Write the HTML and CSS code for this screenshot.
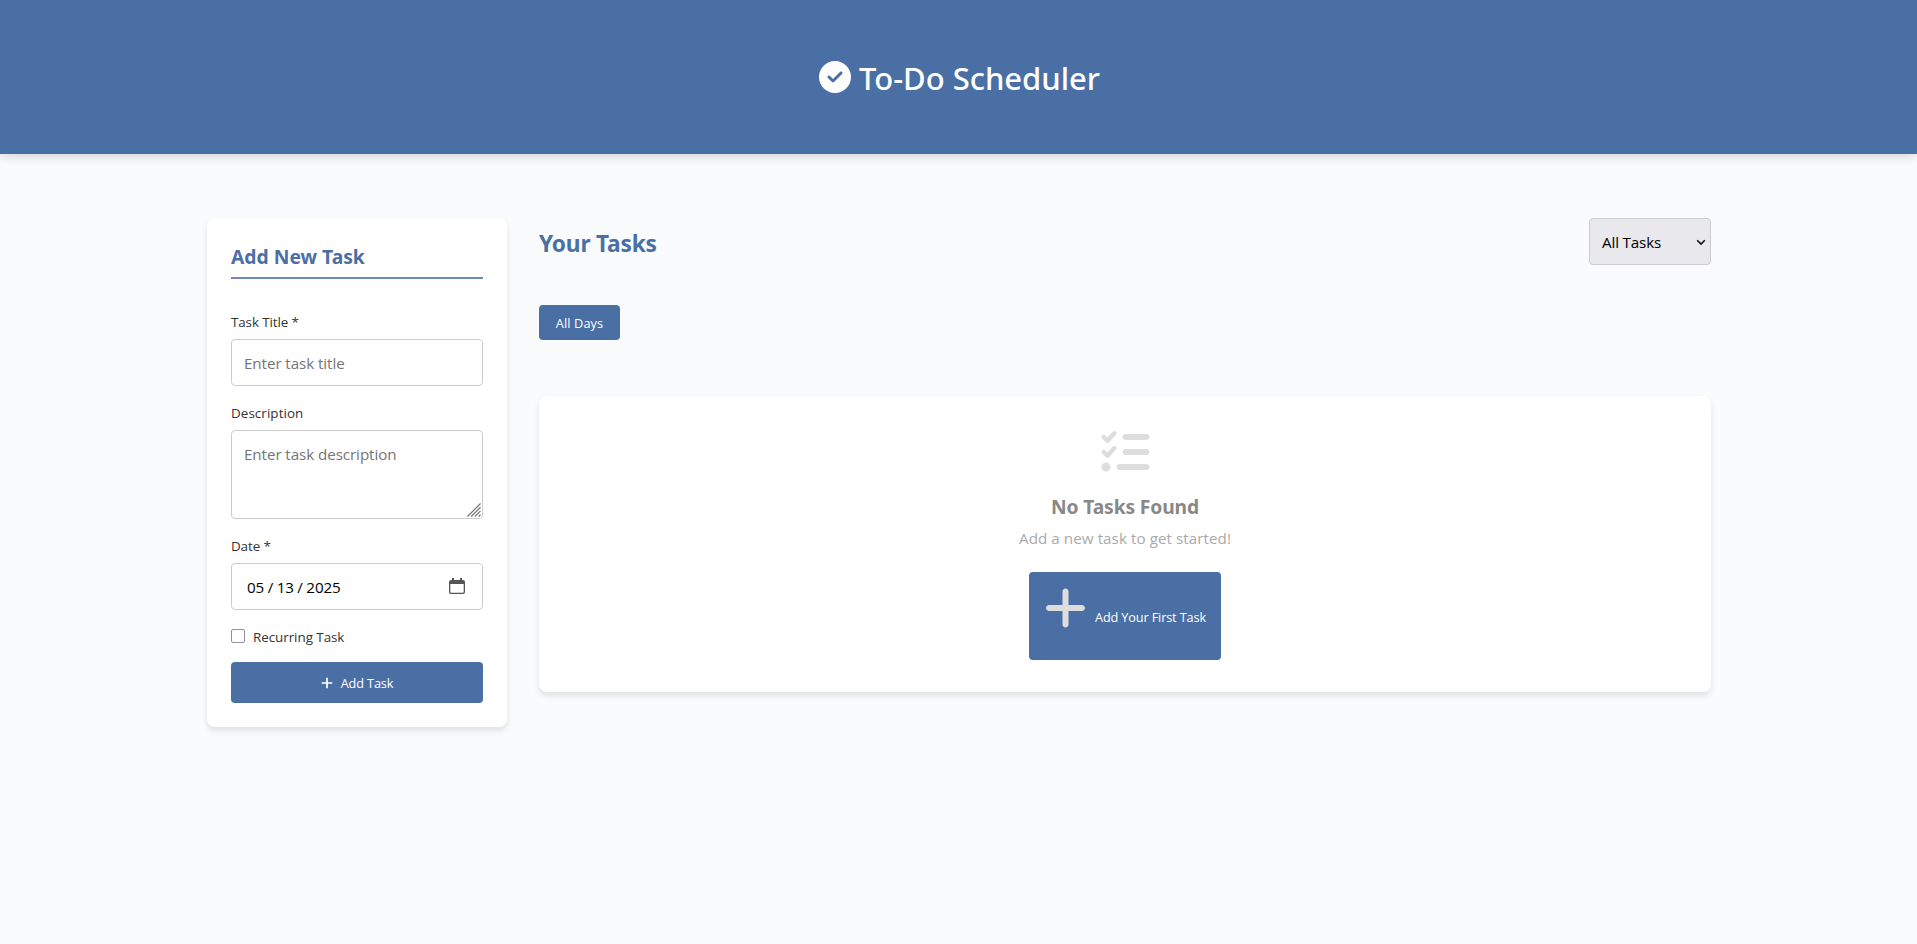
FILE: index.html
```html
<!DOCTYPE html>
<html lang="en">
<head>
<meta charset="utf-8">
<title>To-Do Scheduler</title>
<link rel="stylesheet" href="styles.css">
</head>
<body>
<header class="site-header">
  <h1 class="site-title">
    <svg class="title-icon" viewBox="0 0 512 512"><path fill="currentColor" d="M256 512A256 256 0 1 0 256 0a256 256 0 1 0 0 512zM369 209L241 337c-9.400 9.400-24.600 9.400-33.900 0l-64-64c-9.400-9.400-9.400-24.600 0-33.900s24.600-9.400 33.900 0l47 47L335 175c9.400-9.400 24.600-9.400 33.900 0s9.400 24.600 0 33.900z"/></svg>
    <span class="title-text">To-Do Scheduler</span>
  </h1>
</header>
<main class="layout">
  <form class="card task-form">
    <h2 class="form-title">Add New Task</h2>
    <label class="field-label" for="title">Task Title *</label>
    <input class="control" id="title" type="text" placeholder="Enter task title">
    <label class="field-label field-label-wide" for="desc">Description</label>
    <div class="area-wrap">
      <textarea class="control area" id="desc" placeholder="Enter task description"></textarea>
      <svg class="grip" viewBox="0 0 15 15"><path d="M.5 14.500l14-14M4.500 14.500l10-10M8.500 14.500l6-6M12.500 14.500l2-2" stroke="#777" stroke-width="1.300"/></svg>
    </div>
    <label class="field-label" for="date">Date *</label>
    <div class="date-wrap">
      <input class="control date" id="date" type="date" value="2025-05-13">
      <svg class="calendar" viewBox="0 0 16 16"><path fill="#555" fill-rule="evenodd" d="M3 0h2v2h6V0h2v2h1a2 2 0 0 1 2 2v10a2 2 0 0 1-2 2H2a2 2 0 0 1-2-2V4a2 2 0 0 1 2-2h1zM1.300 6v7.700a1 1 0 0 0 1 1h11.400a1 1 0 0 0 1-1V6z"/></svg>
    </div>
    <label class="check-row"><input class="check" type="checkbox"><span class="check-text">Recurring Task</span></label>
    <button class="btn submit" type="button">
      <svg class="plus" viewBox="0 0 448 512"><path fill="currentColor" d="M256 80c0-17.700-14.300-32-32-32s-32 14.300-32 32v144H48c-17.700 0-32 14.300-32 32s14.300 32 32 32h144v144c0 17.700 14.300 32 32 32s32-14.300 32-32V288h144c17.700 0 32-14.300 32-32s-14.300-32-32-32H256V80z"/></svg>
      <span>Add Task</span>
    </button>
  </form>
  <section class="tasks">
    <div class="tasks-head">
      <h2 class="tasks-title">Your Tasks</h2>
      <div class="select-wrap">
        <select class="control filter"><option>All Tasks</option></select>
        <svg class="chevron" viewBox="0 0 10 7"><path d="M1.200 1.200L5 5l3.800-3.800" fill="none" stroke="#111" stroke-width="1.600"/></svg>
      </div>
    </div>
    <div class="days"><button class="btn day" type="button">All Days</button></div>
    <div class="card empty">
      <svg class="list-icon" viewBox="0 0 512 512"><path fill="currentColor" d="M152.100 38.200c9.900 8.900 10.700 24 1.800 33.900l-72 80c-4.400 4.900-10.600 7.800-17.200 7.900s-12.900-2.400-17.600-7L7 113C-2.300 103.600-2.300 88.400 7 79s24.600-9.400 33.900 0l22.100 22.100 55.100-61.200c8.900-9.900 24-10.700 33.900-1.800zm0 160c9.900 8.900 10.700 24 1.800 33.900l-72 80c-4.400 4.900-10.600 7.800-17.200 7.900s-12.900-2.400-17.600-7L7 273c-9.400-9.400-9.400-24.600 0-33.900s24.600-9.400 33.900 0l22.100 22.100 55.100-61.200c8.900-9.900 24-10.700 33.900-1.800zM224 96c0-17.700 14.300-32 32-32H480c17.700 0 32 14.300 32 32s-14.300 32-32 32H256c-17.700 0-32-14.300-32-32zm0 160c0-17.700 14.300-32 32-32H480c17.700 0 32 14.300 32 32s-14.300 32-32 32H256c-17.700 0-32-14.300-32-32zM160 416c0-17.700 14.300-32 32-32H480c17.700 0 32 14.300 32 32s-14.300 32-32 32H192c-17.700 0-32-14.300-32-32zM48 368a48 48 0 1 1 0 96 48 48 0 1 1 0-96z"/></svg>
      <h3 class="empty-title">No Tasks Found</h3>
      <p class="empty-text">Add a new task to get started!</p>
      <button class="btn first" type="button">
        <svg class="plus-big" viewBox="0 0 448 512"><path fill="currentColor" d="M256 80c0-17.700-14.300-32-32-32s-32 14.300-32 32v144H48c-17.700 0-32 14.300-32 32s14.300 32 32 32h144v144c0 17.700 14.300 32 32 32s32-14.300 32-32V288h144c17.700 0 32-14.300 32-32s-14.300-32-32-32H256V80z"/></svg>
        <span class="first-text">Add Your First Task</span>
      </button>
    </div>
  </section>
</main>
</body>
</html>
```
FILE: styles.css
```css
* { box-sizing: border-box; margin: 0; }
body { min-height: 944px; background: #fafbfd; color: #333; font: 15.2px/24px "Open Sans", "Noto Sans", sans-serif; }
h1, h2, h3 { font-family: "Noto Sans", "Open Sans", sans-serif; }
.site-header { height: 154px; display: flex; justify-content: center; align-items: center; background: #4a6fa5; color: #fff; box-shadow: 0 2px 10px rgba(0,0,0,.16); }
.site-title { display: flex; gap: 8px; align-items: center; padding: 2px 0 0 2px; font-size: 31px; font-weight: 500; line-height: 48px; letter-spacing: -.02px; }
.title-icon { width: 32px; height: 32px; margin-bottom: 3px; }
.layout { display: flex; align-items: flex-start; gap: 32px; width: 1504px; margin: 64px 0 0 207px; }
.card { background: #fff; border-radius: 8px; box-shadow: 0 4px 6px rgba(0,0,0,.1); }
.task-form { width: 300px; height: 509px; padding: 24px; flex: none; }
.form-title { height: 37px; margin-bottom: 32px; border-bottom: 2px solid #6b8cbb; color: #4a6fa5; font-size: 19.3px; line-height: 30px; }
.field-label { display: block; margin-bottom: 6px; font-size: 13.4px; line-height: 22px; letter-spacing: -.1px; }
.field-label-wide { letter-spacing: .08px; }
.control { display: block; width: 100%; height: 47px; margin-bottom: 16px; padding: 12px; border: 1px solid #ccc; border-radius: 4px; background: #fff; font: inherit; line-height: 21px; letter-spacing: -.08px; }
.area-wrap, .date-wrap { position: relative; }
.area { height: 89px; padding-top: 13px; resize: none; }
.grip { position: absolute; right: 2px; bottom: 2px; width: 14px; height: 14px; }
.date { padding: 13px 12px 11px 14px; color: #000; letter-spacing: -.1px; }
.date::-webkit-datetime-edit-text { padding: 0 2.5px; }
.date::-webkit-calendar-picker-indicator { opacity: 0; }
.calendar { position: absolute; right: 18px; top: 15px; width: 16px; height: 16px; }
.check-row { display: flex; align-items: center; gap: 8px; height: 22px; margin-bottom: 14px; font-size: 13.4px; letter-spacing: -.04px; }
.check { appearance: none; width: 14px; height: 14px; margin-bottom: 2px; border: 1px solid #8f8f9d; border-radius: 2px; background: #fff; }
.btn { border: 0; border-radius: 4px; background: #4a6fa5; color: #fff; font: 12.7px/18px "Open Sans", "Noto Sans", sans-serif; letter-spacing: -.13px; }
.submit { display: flex; align-items: center; justify-content: center; gap: 8px; width: 100%; height: 41px; }
.plus { width: 12px; height: 14px; }
.tasks { flex: 1; }
.tasks-head { display: flex; justify-content: space-between; height: 87px; }
.tasks-title { color: #4a6fa5; font-size: 22.7px; line-height: 52px; letter-spacing: -.2px; }
.select-wrap { position: relative; width: 122px; }
.filter { appearance: none; padding: 13px 12px 11px; background: #e9e9ed; color: #000; letter-spacing: -.15px; }
.chevron { position: absolute; right: 5px; top: 21px; width: 10px; height: 7px; }
.days { height: 91px; }
.day { width: 81px; height: 35px; letter-spacing: .15px; }
.empty { display: flex; flex-direction: column; align-items: center; height: 296px; padding-top: 32px; }
.list-icon { width: 49px; height: 48px; margin-left: 1px; color: #ddd; }
.empty-title { margin-top: 16px; color: #888; font-size: 19.3px; line-height: 30px; letter-spacing: -.15px; }
.empty-text { margin-top: 4px; color: #aaa; letter-spacing: .06px; }
.first { display: flex; gap: 8px; width: 192px; height: 88px; margin-top: 22px; padding: 12px 15px; white-space: nowrap; }
.plus-big { width: 43px; height: 48px; flex: none; color: #ddd; }
.first-text { margin-top: 24px; }
```
